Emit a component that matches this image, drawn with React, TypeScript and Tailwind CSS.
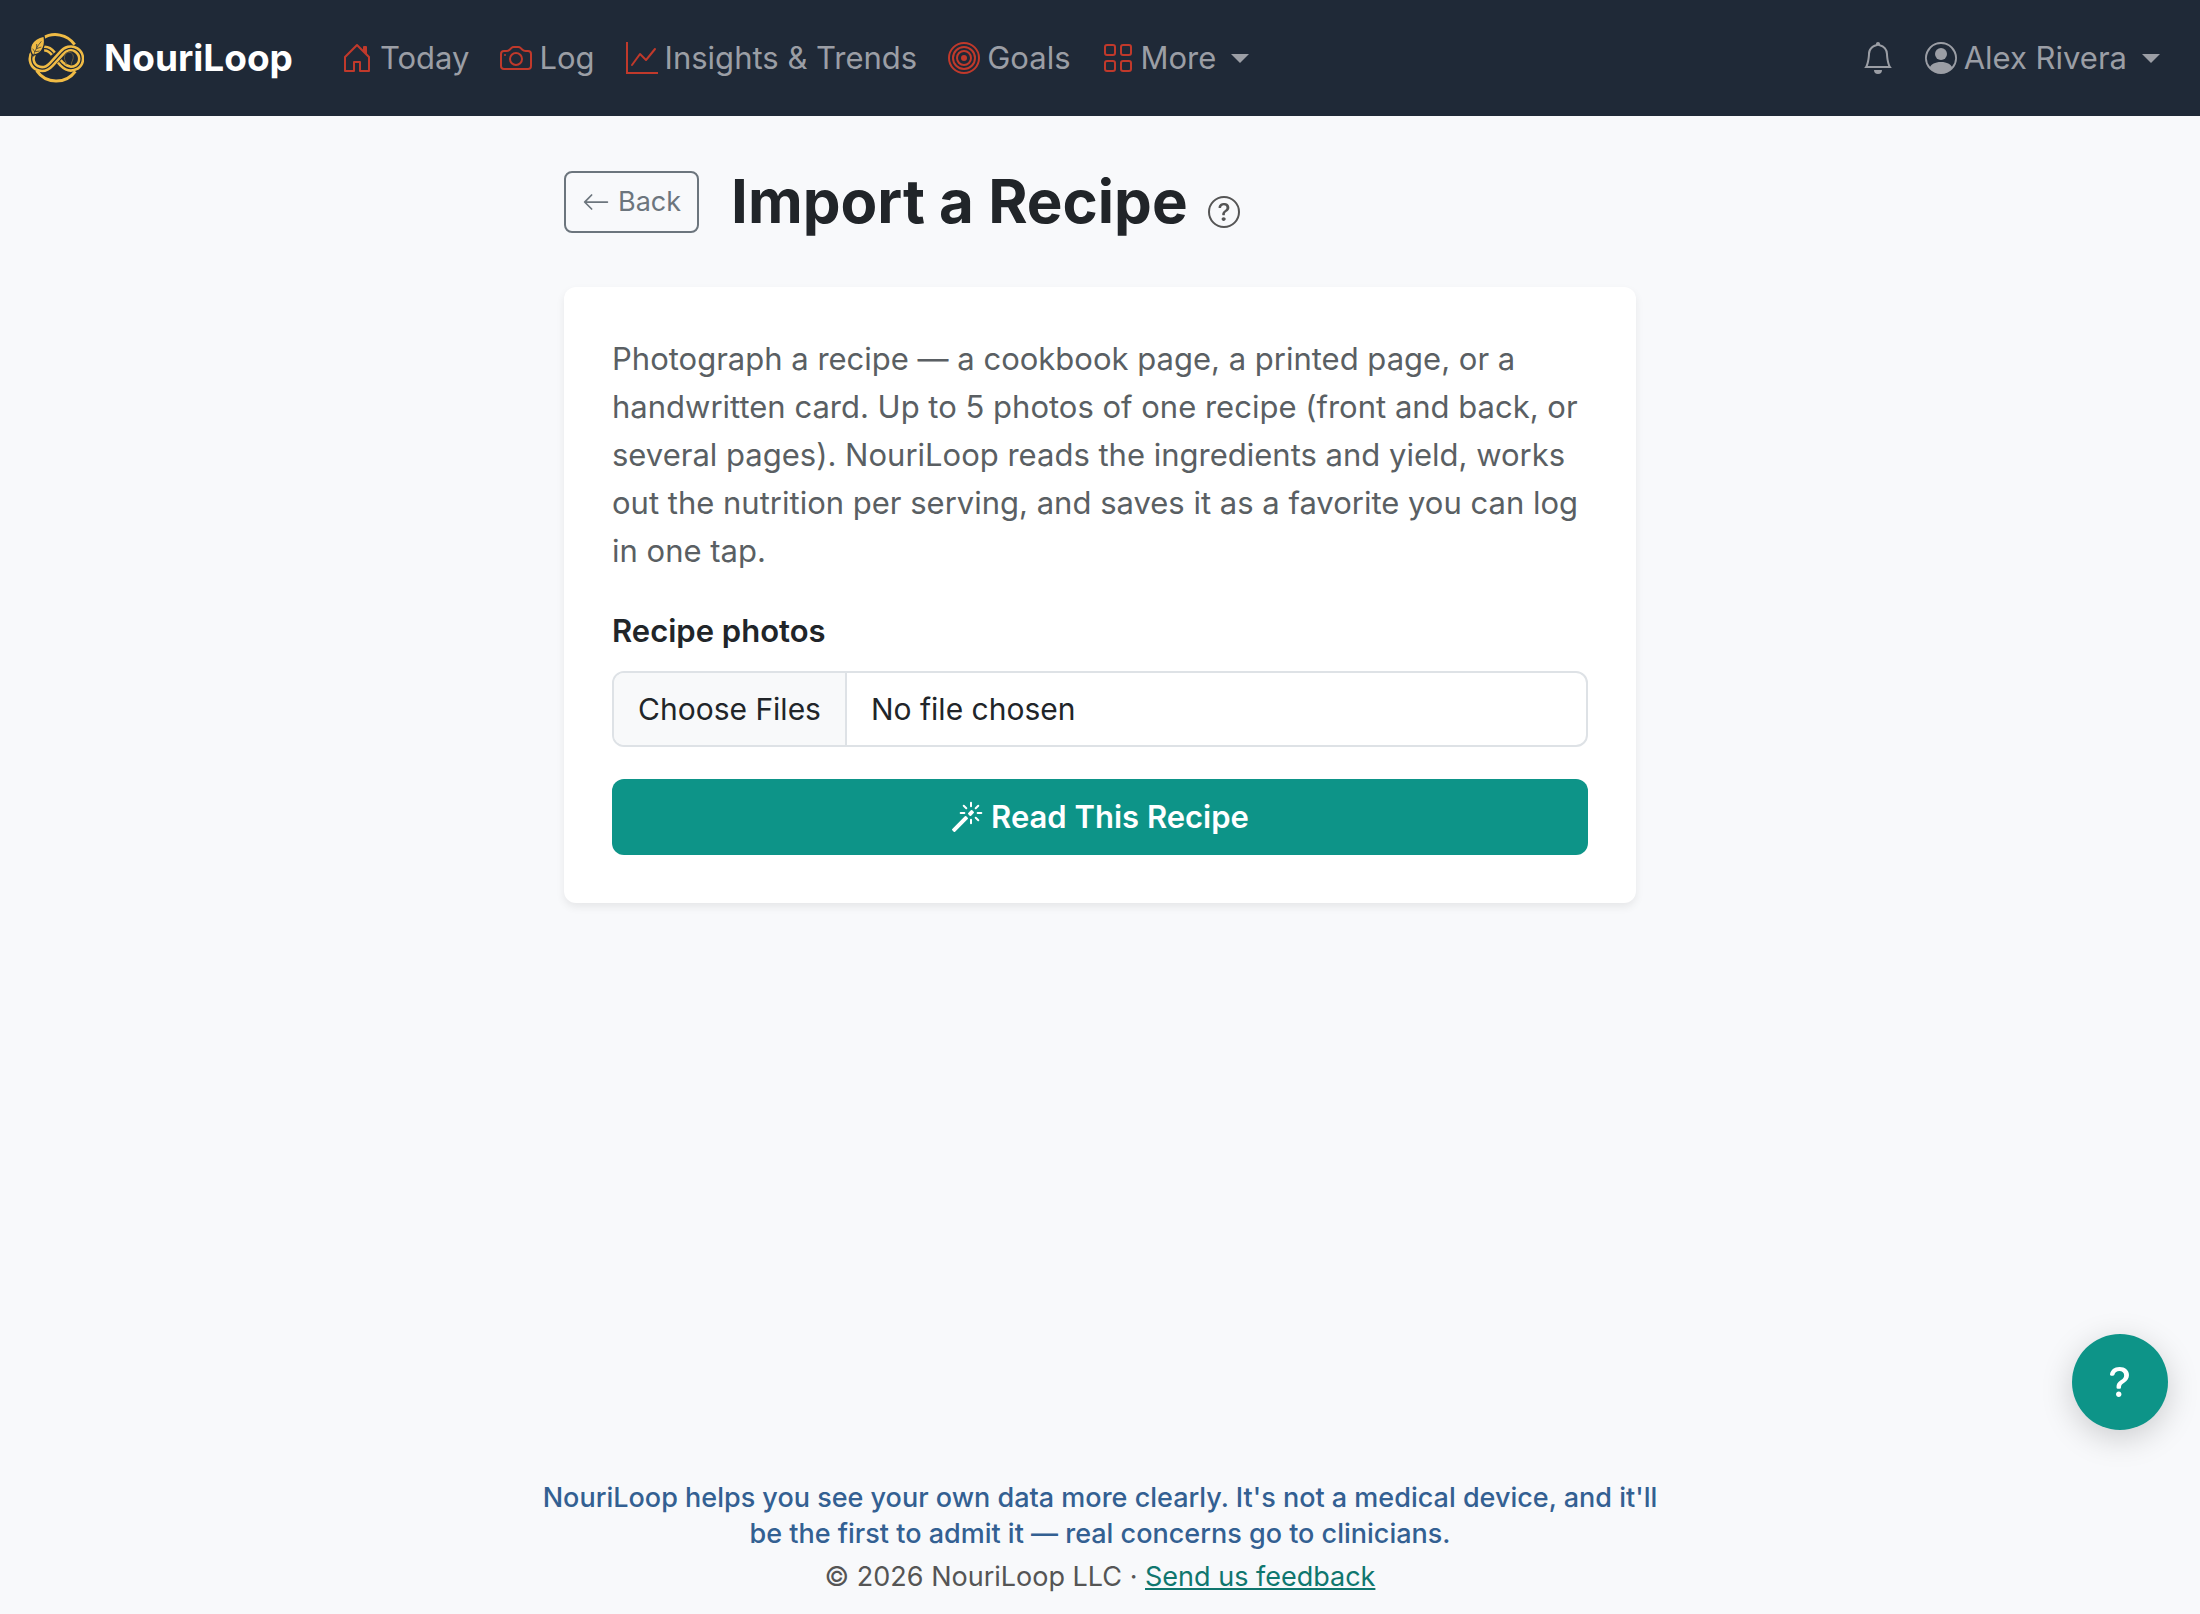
import React, { useState } from "react";
import {
  BsArrowLeft,
  BsBell,
  BsBullseye,
  BsCamera,
  BsGraphUp,
  BsGrid,
  BsHouseDoor,
  BsMagic,
  BsPersonCircle,
  BsQuestionCircle,
  BsQuestionLg,
} from "react-icons/bs";

const navLinks = [
  { label: "Today", icon: BsHouseDoor },
  { label: "Log", icon: BsCamera },
  { label: "Insights & Trends", icon: BsGraphUp },
  { label: "Goals", icon: BsBullseye },
];

const loopPath =
  "M30 72C18 88 22 110 38 119C54 127 70 122 82 109L112 76C124 62 142 56 157 66C176 79 176 105 158 117C142 126 126 121 114 109L106 100M60 62C72 61 80 67 88 77";

const Logo = () => (
  <svg viewBox="12 6 168 168" className="w-14 h-14" fill="none" stroke="#f0bb45">
    <path d="M56 31A71 71 0 0 1 152 50" strokeWidth="9" />
    <path d="M38 128A71 71 0 0 0 154 130" strokeWidth="9" />
    <path d={loopPath} strokeWidth="19" />
    <path d={loopPath} stroke="#1f2937" strokeWidth="4" />
    {/* face outline inside the right loop */}
    <path
      d="M126 110V102C118 94 120 74 134 73C148 72 150 86 146 96C145 100 142 102 142 110"
      stroke="#6b5c3a"
      strokeWidth="3"
    />
    {/* leaf */}
    <path
      d="M26 82C12 60 20 34 60 24C66 50 56 76 34 80Z"
      fill="#f0bb45"
      stroke="#1f2937"
      strokeWidth="4"
    />
    <path
      d="M28 86C32 68 40 54 52 40M38 62V48M33 72L26 62M38 62L52 57M34 71L47 69"
      stroke="#1f2937"
      strokeWidth="2"
    />
  </svg>
);

const Caret = () => (
  <svg viewBox="0 0 18 9" className="ml-2 w-[18px] h-[9px]" fill="currentColor">
    <path d="M0 0H18L9 9Z" />
  </svg>
);

const NavBar = () => {
  return (
    <nav className="flex items-center justify-between bg-[#1f2937] pl-7 pr-10 h-[116px] text-[#9b9ea5] text-[31px]">
      <div className="flex items-center">
        <a href="#" className="flex items-center gap-5 mr-12 font-bold text-white text-[37px]">
          <Logo />
          NouriLoop
        </a>
        <div className="flex items-center gap-[31px]">
          {navLinks.map(({ label, icon: Icon }) => (
            <a key={label} href="#" className="flex items-center gap-[7px]">
              <Icon className="w-8 h-8 text-[#c0392b]" />
              {label}
            </a>
          ))}
          <button className="flex items-center gap-[7px]">
            <BsGrid className="w-8 h-8 text-[#c0392b]" />
            More
            <Caret />
          </button>
        </div>
      </div>
      <div className="flex items-center gap-[31px]">
        <button aria-label="Notifications">
          <BsBell className="w-8 h-8" />
        </button>
        <button className="flex items-center gap-[7px]">
          <BsPersonCircle className="w-8 h-8" />
          Alex Rivera
          <Caret />
        </button>
      </div>
    </nav>
  );
};

const ImportForm = () => {
  const [photos, setPhotos] = useState<FileList | null>(null);

  const readRecipe = (e: React.FormEvent) => {
    e.preventDefault();
    console.log(photos?.length);
  };

  return (
    <form
      onSubmit={readRecipe}
      className="flex flex-col rounded-xl bg-white p-12 text-[31px] leading-[48px] shadow-[0_4px_8px_rgba(0,0,0,0.075)]"
    >
      <p className="mb-8 text-[#5a5f63]">
        Photograph a recipe — a cookbook page, a printed page, or a handwritten card. Up to 5 photos
        of one recipe (front and back, or several pages). NouriLoop reads the ingredients and yield,
        works out the nutrition per serving, and saves it as a favorite you can log in one tap.
      </p>
      <label htmlFor="photos" className="mb-4 font-semibold">
        Recipe photos
      </label>
      <input
        id="photos"
        type="file"
        multiple
        onChange={(e) => setPhotos(e.target.files)}
        className="mb-8 w-full rounded-xl border-2 border-[#dee2e6] text-[30px] file:mr-6 file:border-r-2 file:border-[#dee2e6] file:bg-[#f8f9fa] file:px-6 file:py-3"
      />
      <button
        type="submit"
        className="flex items-center justify-center gap-2 rounded-xl bg-[#0d9488] py-[14px] font-semibold text-white"
      >
        <BsMagic className="w-8 h-8" />
        Read This Recipe
      </button>
    </form>
  );
};

const App = () => {
  return (
    <div className="relative flex min-h-screen flex-col bg-[#f8f9fb] font-['Inter',sans-serif] text-[#212529]">
      <NavBar />
      <main className="mx-auto w-full max-w-[1120px] flex-1 px-6 pt-12">
        <div className="mb-12 flex items-center gap-8">
          <a
            href="#"
            className="flex items-center gap-2 rounded-lg border-2 border-[#6c757d] px-4 py-2 text-[27px] leading-[42px] text-[#6c757d]"
          >
            <BsArrowLeft className="w-7 h-7" />
            Back
          </a>
          <h1 className="flex items-center gap-5 text-[60px] leading-[75px] font-bold">
            Import a Recipe
            <button aria-label="Help" className="flex pt-5 text-[#555]">
              <BsQuestionCircle className="w-8 h-8" />
            </button>
          </h1>
        </div>
        <ImportForm />
      </main>
      <footer className="mx-auto max-w-[1184px] px-6 pb-4 text-center text-[27px]">
        <p className="mb-1 font-medium leading-9 text-[#336092]">
          NouriLoop helps you see your own data more clearly. It's not a medical device, and it'll be
          the first to admit it — real concerns go to clinicians.
        </p>
        <p className="leading-[42px] text-[#555]">
          © 2026 NouriLoop LLC ·{" "}
          <a href="#" className="text-[#0f766e] underline">
            Send us feedback
          </a>
        </p>
      </footer>
      <button
        aria-label="Support"
        className="fixed right-8 bottom-[184px] flex h-24 w-24 items-center justify-center rounded-full bg-[#0d9488] text-white shadow-[0_8px_32px_rgba(0,0,0,0.18)]"
      >
        <BsQuestionLg className="w-10 h-10" />
      </button>
    </div>
  );
};

export default App;
